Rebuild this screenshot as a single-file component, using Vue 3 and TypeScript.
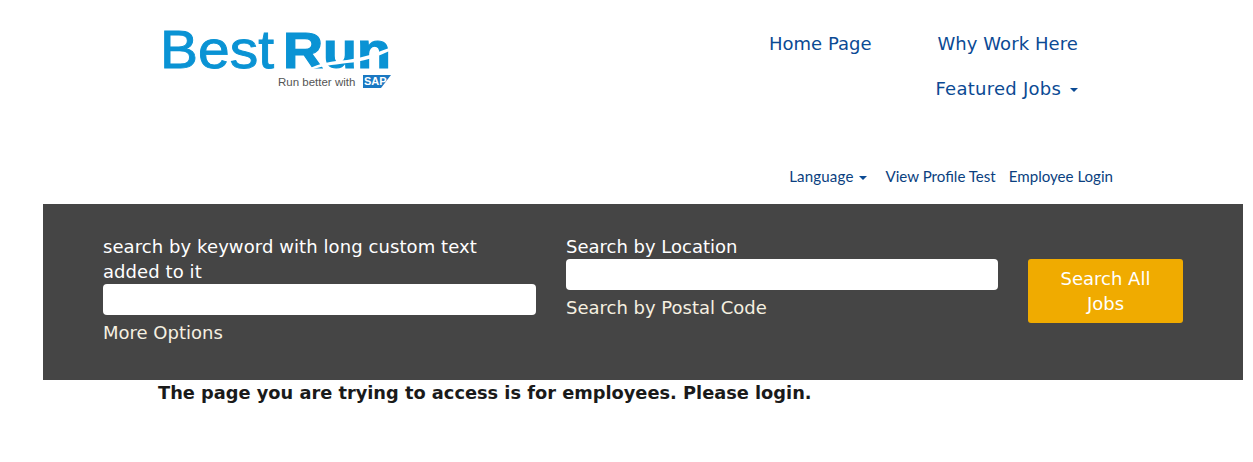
<template>
  <div class="page">
    <header class="top">
      <a class="logo" href="#" aria-label="Best Run">
        <svg width="232" height="66" viewBox="0 0 232 66">
          <text x="-2" y="43" class="best" textLength="114" lengthAdjust="spacingAndGlyphs">Best</text>
          <text x="121" y="43" class="run" textLength="108" lengthAdjust="spacingAndGlyphs">Run</text>
          <path d="M146 44 C158 38 170 36 185 35 C200 33 215 28 232 21 L232 24 C215 32 200 37 185 38 C170 40 158 41 146 46 Z" fill="#fff" />
          <text x="116" y="61" class="tag">Run better with</text>
          <path d="M201 50 H229 L219 63 H201 Z" fill="#1a78c2" />
          <text x="202" y="60" class="sap">SAP</text>
        </svg>
      </a>
      <nav class="main-nav">
        <a href="#">Home Page</a>
        <a href="#" class="why">Why Work Here</a>
        <a href="#" class="featured">Featured Jobs <span class="caret"></span></a>
      </nav>
    </header>

    <div class="util">
      <a href="#">Language <span class="caret small"></span></a>
      <a href="#">View Profile Test</a>
      <a href="#">Employee Login</a>
    </div>

    <section class="banner">
      <div class="col">
        <label class="long">search by keyword with long custom text added to it</label>
        <input type="text" />
        <a href="#" class="sub">More Options</a>
      </div>
      <div class="col">
        <label>Search by Location</label>
        <input type="text" />
        <a href="#" class="sub">Search by Postal Code</a>
      </div>
      <button type="button" class="go">Search All Jobs</button>
    </section>

    <p class="msg">The page you are trying to access is for employees. Please login.</p>
  </div>
</template>

<script setup lang="ts">
</script>

<style>
body {
  background: #fff;
}
</style>

<style scoped>
.page {
  font-family: "DejaVu Sans", Verdana, sans-serif;
  height: 462px;
  overflow: hidden;
}

a {
  text-decoration: none;
}

.top {
  display: flex;
  justify-content: space-between;
  height: 164px;
  padding: 0 175px 0 162px;
}

.logo {
  display: block;
  height: 66px;
  margin-top: 25px;
}

.logo svg {
  overflow: visible;
}

.best,
.run {
  font-family: "Liberation Sans", Arial, sans-serif;
  fill: #0a93d4;
  stroke: #0a93d4;
}

.best {
  font-size: 54px;
  stroke-width: 0.9px;
}

.run {
  font-size: 50px;
  font-weight: 700;
  stroke-width: 1.2px;
}

.tag {
  font-family: "Liberation Sans", Arial, sans-serif;
  font-size: 11.5px;
  fill: #555;
}

.sap {
  font-family: "Liberation Sans", Arial, sans-serif;
  font-size: 11px;
  font-weight: 700;
  fill: #fff;
}

.main-nav {
  display: grid;
  grid-template-columns: auto auto;
  grid-auto-rows: 45px;
  column-gap: 64px;
  justify-items: end;
  align-items: center;
  align-content: start;
  padding-top: 21px;
  font-size: 18px;
}

.main-nav a {
  color: #0b4a94;
}

.why {
  letter-spacing: 0.08px;
}

.featured {
  grid-column: 2;
  letter-spacing: 0.25px;
}

.caret {
  display: inline-block;
  width: 0;
  height: 0;
  margin-left: 3px;
  vertical-align: middle;
  border-top: 4px solid #0b4a94;
  border-left: 4px solid transparent;
  border-right: 4px solid transparent;
}

.util {
  display: flex;
  justify-content: flex-end;
  align-items: center;
  gap: 13px;
  box-sizing: border-box;
  height: 25px;
  padding: 0 140px 2px 0;
  font-family: Lato, sans-serif;
  font-size: 15.1px;
}

.util a {
  color: #0b3f80;
}

.util a:first-child {
  margin-right: 6px;
  letter-spacing: 0.15px;
}

.caret.small {
  margin-left: 1px;
}

.banner {
  display: grid;
  grid-template-columns: 433px 432px 155px;
  column-gap: 30px;
  align-items: start;
  box-sizing: border-box;
  width: 1200px;
  height: 176px;
  margin: 15px 0 0 43px;
  padding: 30px 60px 0;
  background: #454545;
  color: #fff;
  font-size: 18px;
  line-height: 25px;
}

.col label {
  display: block;
}

.col .long {
  max-width: 400px;
  letter-spacing: 0.08px;
}

.col input {
  display: block;
  box-sizing: border-box;
  width: 100%;
  height: 31px;
  border: 0;
  border-radius: 4px;
  background: #fff;
}

.sub {
  display: block;
  margin-top: 5px;
  color: #f5f0e0;
}

.go {
  margin-top: 25px;
  height: 64px;
  padding: 7px 20px;
  border: 0;
  border-radius: 3px;
  background: #f0ab00;
  color: #fff;
  font: inherit;
}

.msg {
  margin: 0;
  padding-left: 158px;
  color: #1a1a1a;
  font-size: 17.8px;
  font-weight: 700;
  line-height: 26px;
}
</style>
